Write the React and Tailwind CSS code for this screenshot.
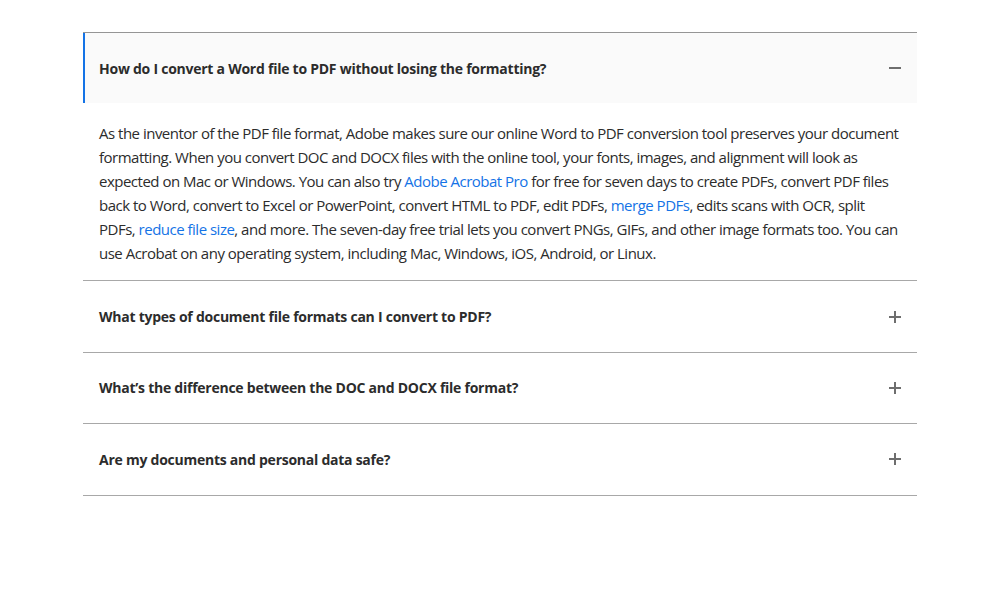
import React, { useState } from 'react';

const link = 'text-[#1473e6]';

const faqs = [
  {
    q: 'How do I convert a Word file to PDF without losing the formatting?',
    a: (
      <>
        As the inventor of the PDF file format, Adobe makes sure our online Word to PDF conversion tool preserves your document
        <br />
        formatting. When you convert DOC and DOCX files with the online tool, your fonts, images, and alignment will look as
        <br />
        expected on Mac or Windows. You can also try <a href="#" className={link}>Adobe Acrobat Pro</a> for free for seven days to create PDFs, convert PDF files
        <br />
        back to Word, convert to Excel or PowerPoint, convert HTML to PDF, edit PDFs, <a href="#" className={link}>merge PDFs</a>, edits scans with OCR, split
        <br />
        PDFs, <a href="#" className={link}>reduce file size</a>, and more. The seven-day free trial lets you convert PNGs, GIFs, and other image formats too. You can
        <br />
        use Acrobat on any operating system, including Mac, Windows, iOS, Android, or Linux.
      </>
    ),
  },
  { q: 'What types of document file formats can I convert to PDF?', a: null },
  { q: 'What’s the difference between the DOC and DOCX file format?', a: null },
  { q: 'Are my documents and personal data safe?', a: null },
];

const Icon = ({ open }) => (
  <svg width="14" height="14" viewBox="0 0 14 14" className="text-[#6e6e6e]">
    <rect x="1" y="6" width="12" height="2" fill="currentColor" />
    {!open && <rect x="6" y="1" width="2" height="12" fill="currentColor" />}
  </svg>
);

export default function App() {
  const [open, setOpen] = useState(0);

  return (
    <div className="min-h-[600px] bg-white pt-8" style={{ fontFamily: '"Open Sans", sans-serif' }}>
      <div className="mx-[83px] border-t border-[#959595]">
        {faqs.map((f, i) => {
          const isOpen = open === i;
          return (
            <div key={i} className="border-b border-[#a8a8a8]">
              <button
                onClick={() => setOpen(isOpen ? -1 : i)}
                className={`w-full h-[70.4px] flex items-center justify-between pl-[14px] pr-[15px] text-left border-l-2 ${
                  isOpen ? 'bg-[#fafafa] border-[#1473e6]' : 'border-transparent'
                }`}
              >
                <span className="text-[14px] font-bold tracking-[-0.25px] text-[#2c2c2c]">{f.q}</span>
                <Icon open={isOpen} />
              </button>
              {isOpen && f.a && (
                <div className="pl-4 pr-2 pt-[18px] pb-[15px] text-[15px] leading-6 tracking-[-0.5px] whitespace-nowrap text-[#2c2c2c]">
                  {f.a}
                </div>
              )}
            </div>
          );
        })}
      </div>
    </div>
  );
}
